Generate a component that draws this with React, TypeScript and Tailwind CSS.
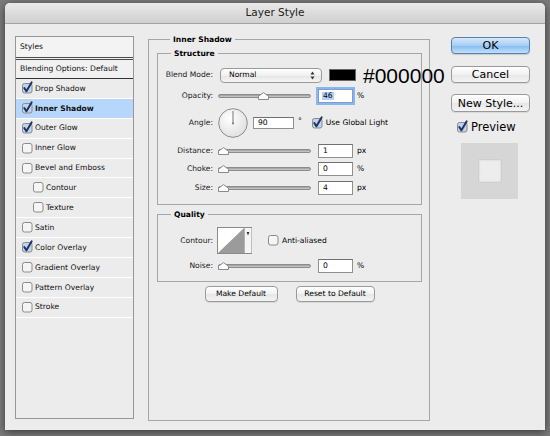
import React from "react";

const Check = ({ on }: { on?: boolean }) => (
  <svg width="11" height="11" viewBox="0 0 11 11" className="shrink-0 overflow-visible">
    <rect x="0.5" y="0.5" width="9.5" height="9.5" rx="2" fill={on ? "#c3d3ea" : "#f5f5f5"} stroke="#8a8a8a" />
    {on && (
      <path d="M2.3 5 L4.4 8.3 L9.6 -0.6" fill="none" stroke="#1c3466" strokeWidth="2" strokeLinecap="round" strokeLinejoin="round" />
    )}
  </svg>
);

const Slider = ({ left }: { left: number }) => (
  <div className="relative ml-[5px] w-[93px] h-[10px] flex items-center shrink-0">
    <div className="w-full h-[4px] rounded-full border border-[#8c8c8c] bg-[linear-gradient(#9a9a9a,#cfcfcf)]" />
    <svg className="absolute top-[1px]" style={{ left: `${left}px` }} width="11" height="8" viewBox="0 0 11 8">
      <path d="M0.5 7.5 V4.2 L5.5 0.6 L10.5 4.2 V7.5 Z" fill="#fbfbfb" stroke="#8a8a8a" strokeLinejoin="round" />
    </svg>
  </div>
);

const Field = ({ v, focus }: { v: string; focus?: boolean }) => (
  <div
    className={
      focus
        ? "ml-[7px] w-[35px] h-[14px] shrink-0 bg-white border border-[#7d9fcf] shadow-[0_0_0_2px_#8ab6ee] flex items-center pl-[3px]"
        : "ml-[7px] w-[35px] h-[14px] shrink-0 bg-white border border-[#8f8f8f] border-t-[#6f6f6f] flex items-center pl-[4px]"
    }
  >
    {focus ? <span className="bg-[#b5d3f8] px-[1px]">{v}</span> : v}
  </div>
);

const Label = ({ t }: { t: string }) => <div className="w-[55px] text-right shrink-0 text-[#1a1a1a]">{t}</div>;

const SliderRow = ({ label, left, v, unit, cls, focus }: { label: string; left: number; v: string; unit: string; cls: string; focus?: boolean }) => (
  <div className={cls}>
    <Label t={label} />
    <Slider left={left} />
    <Field v={v} focus={focus} />
    <div className="ml-[4px]">{unit}</div>
  </div>
);

const Row = ({ t, on, sel, sub }: { t: string; on?: boolean; sel?: boolean; sub?: boolean }) => (
  <div
    className={
      (sel ? "bg-[#b7d6fb] font-bold " : "") +
      (sub ? "pl-[17px] " : "pl-[6px] ") +
      "h-[19.9px] shrink-0 border-b border-white flex items-center"
    }
  >
    <Check on={on} />
    <span className="ml-[2px]">{t}</span>
  </div>
);

const Btn = ({ t, cls }: { t: string; cls: string }) => (
  <div className={cls + " rounded-[4px] border border-[#9a9a9a] bg-[linear-gradient(#ffffff,#f1f1f1_50%,#e6e6e6_51%,#f4f4f4)] flex items-center justify-center shadow-[0_1px_0_rgba(0,0,0,0.08)]"}>
    {t}
  </div>
);

export default function App() {
  return (
    <div className="w-[550px] h-[436px] bg-[#7b7b7b] pt-[3px] pl-[5px] overflow-hidden font-['DejaVu_Sans',sans-serif] text-black">
      <div className="w-[540px] h-[427px] bg-[#ececec] rounded-t-[5px] shadow-[0_2px_8px_rgba(0,0,0,0.55)] flex flex-col">
        <div className="h-[21px] shrink-0 rounded-t-[5px] bg-[linear-gradient(#e9e9e9,#d0d0d0)] border-b border-[#a3a3a3] flex items-center justify-center text-[10.5px] text-[#222]">
          Layer Style
        </div>
        <div className="flex items-start pl-[10px]">
          {/* Left styles list */}
          <div className="mt-[12px] w-[119px] h-[383px] shrink-0 border border-[#979797] bg-[#ececec] flex flex-col text-[7.6px] leading-none text-[#111]">
            <div className="h-[23px] shrink-0 bg-[#f3f3f3] flex items-center pl-[4px] border-b-[3px] border-double border-[#4a4a4a]">Styles</div>
            <div className="h-[19px] shrink-0 bg-[#f1f1f1] flex items-center pl-[4px] border-b border-[#333]">Blending Options: Default</div>
            <Row t="Drop Shadow" on />
            <Row t="Inner Shadow" on sel />
            <Row t="Outer Glow" on />
            <Row t="Inner Glow" />
            <Row t="Bevel and Emboss" />
            <Row t="Contour" sub />
            <Row t="Texture" sub />
            <Row t="Satin" />
            <Row t="Color Overlay" on />
            <Row t="Gradient Overlay" />
            <Row t="Pattern Overlay" />
            <Row t="Stroke" />
          </div>

          {/* Middle */}
          <fieldset className="ml-[14px] mt-[11px] w-[282px] min-w-0 h-[386px] shrink-0 border border-[#a6a6a6] pl-[8px] pr-[7px] text-[7.6px] leading-none">
            <legend className="ml-[13px] px-[3px] font-bold leading-[9px]">Inner Shadow</legend>
            <fieldset className="mt-[5px] min-w-0 border border-[#a6a6a6] pb-[9px]">
              <legend className="ml-[13px] px-[3px] font-bold leading-[9px]">Structure</legend>
              <div className="mt-[9px] h-[16px] flex items-center">
                <Label t="Blend Mode:" />
                <div className="ml-[7px] w-[102px] h-[15px] shrink-0 rounded-[4px] border border-[#9a9a9a] bg-[linear-gradient(#ffffff,#f0f0f0_50%,#e5e5e5_51%,#f5f5f5)] flex items-center justify-between pl-[8px] pr-[6px]">
                  <span>Normal</span>
                  <svg width="5" height="9" viewBox="0 0 5 9">
                    <path d="M0.5 3.5 L2.5 0.5 L4.5 3.5 Z" fill="#333" />
                    <path d="M0.5 5.5 L2.5 8.5 L4.5 5.5 Z" fill="#333" />
                  </svg>
                </div>
                <div className="ml-[7px] w-[27px] h-[12px] shrink-0 bg-black border border-[#666]" />
                <div className="ml-[7px] shrink-0 whitespace-nowrap text-[21px] leading-none font-['Liberation_Sans',Arial,sans-serif]">#000000</div>
              </div>
              <SliderRow cls="mt-[6px] h-[14px] flex items-center" label="Opacity:" left={40} v="46" unit="%" focus />
              <div className="mt-[5px] h-[30px] flex items-center">
                <Label t="Angle:" />
                <svg className="ml-[5px] shrink-0" width="30" height="30" viewBox="0 0 30 30">
                  <defs>
                    <radialGradient id="dial" cx="40%" cy="35%" r="70%">
                      <stop offset="0%" stopColor="#ffffff" />
                      <stop offset="100%" stopColor="#dedede" />
                    </radialGradient>
                  </defs>
                  <circle cx="15" cy="15" r="14.3" fill="url(#dial)" stroke="#8c8c8c" />
                  <line x1="15" y1="15" x2="15" y2="3" stroke="#666" strokeWidth="0.9" />
                  <circle cx="15" cy="15.5" r="0.9" fill="#666" />
                </svg>
                <div className="ml-[5px] w-[41px] h-[12px] shrink-0 bg-white border border-[#8f8f8f] border-t-[#6f6f6f] flex items-center pl-[4px]">90</div>
                <div className="ml-[4px] self-start mt-[9px]">°</div>
                <div className="ml-[10px] flex items-center">
                  <Check on />
                  <span className="ml-[3px]">Use Global Light</span>
                </div>
              </div>
              <SliderRow cls="mt-[6px] h-[14px] flex items-center" label="Distance:" left={0} v="1" unit="px" />
              <SliderRow cls="mt-[4px] h-[14px] flex items-center" label="Choke:" left={0} v="0" unit="%" />
              <SliderRow cls="mt-[5px] h-[14px] flex items-center" label="Size:" left={0} v="4" unit="px" />
            </fieldset>

            <fieldset className="mt-[5px] min-w-0 border border-[#a6a6a6] pb-[8px]">
              <legend className="ml-[13px] px-[3px] font-bold leading-[9px]">Quality</legend>
              <div className="mt-[8px] h-[27px] flex items-center">
                <Label t="Contour:" />
                <svg className="ml-[4px] shrink-0" width="35" height="27" viewBox="0 0 35 27">
                  <rect x="0.5" y="0.5" width="34" height="26" fill="#ffffff" stroke="#8a8a8a" />
                  <polygon points="1,26 27,1 27,26" fill="#9b9b9b" />
                  <rect x="27" y="1" width="7.5" height="25" fill="#f4f4f4" />
                  <line x1="27.5" y1="1" x2="27.5" y2="26" stroke="#b3b3b3" />
                  <path d="M29.6 5 L32.4 5 L31 8.5 Z" fill="#333" />
                </svg>
                <div className="ml-[16px] flex items-center">
                  <Check />
                  <span className="ml-[3px]">Anti-aliased</span>
                </div>
              </div>
              <SliderRow cls="mt-[5px] h-[14px] flex items-center" label="Noise:" left={0} v="0" unit="%" />
            </fieldset>

            <div className="mt-[4px] flex justify-center gap-[18px]">
              <Btn t="Make Default" cls="w-[73px] h-[16px]" />
              <Btn t="Reset to Default" cls="w-[79px] h-[16px]" />
            </div>
          </fieldset>

          {/* Right column */}
          <div className="ml-[21px] mt-[13px] w-[79px] shrink-0 flex flex-col text-[11px] leading-none">
            <div className="h-[17px] rounded-[4px] border border-[#5b7fae] bg-[linear-gradient(#d6e8fb,#a6cdf4_50%,#85bbef_51%,#bfe0fd)] flex items-center justify-center shadow-[0_1px_1px_rgba(0,0,0,0.15)]">
              OK
            </div>
            <Btn t="Cancel" cls="mt-[12px] h-[17px]" />
            <Btn t="New Style..." cls="mt-[11px] h-[18px]" />
            <div className="mt-[9px] h-[13px] pl-[6px] flex items-center">
              <Check on />
              <span className="ml-[3px] text-[11.5px]">Preview</span>
            </div>
            <div className="mt-[9px] ml-[10px] w-[57px] h-[56px] bg-[#d6d6d6] flex items-center justify-center">
              <div className="w-[24px] h-[24px] bg-[#ededed] border border-[#cfcfcf] shadow-[inset_0_0_2px_rgba(0,0,0,0.15)]" />
            </div>
          </div>
        </div>
      </div>
    </div>
  );
}
